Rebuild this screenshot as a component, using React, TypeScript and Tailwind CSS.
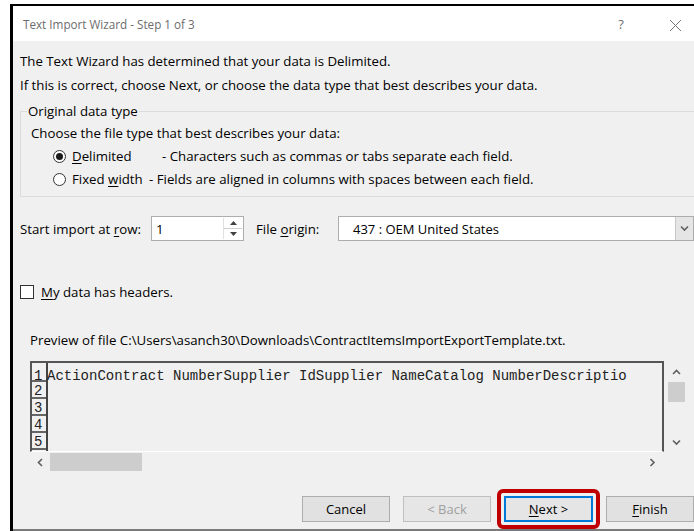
import React from "react";

const ui = "font-['Segoe_UI','Open_Sans',Arial,sans-serif]";
const mono = "font-['Courier_New','Liberation_Mono',monospace]";

function U({ children }: { children: React.ReactNode }) {
  return <span className="underline underline-offset-2">{children}</span>;
}

function Radio({ checked }: { checked?: boolean }) {
  return (
    <span className="w-[13px] h-[13px] rounded-full border border-[#333] bg-white flex items-center justify-center shrink-0">
      {checked && <span className="w-[7px] h-[7px] rounded-full bg-[#1a1a1a]" />}
    </span>
  );
}

function Chevron({ dir }: { dir: "up" | "down" | "left" | "right" }) {
  const d = {
    up: "M1 5 L4.5 1.5 L8 5",
    down: "M1 1.5 L4.5 5 L8 1.5",
    left: "M5 1 L1.5 4.5 L5 8",
    right: "M1.5 1 L5 4.5 L1.5 8",
  }[dir];
  const vertical = dir === "up" || dir === "down";
  return (
    <svg width={vertical ? 9 : 7} height={vertical ? 7 : 9} viewBox={vertical ? "0 0 9 7" : "0 0 7 9"}>
      <path d={d} fill="none" stroke="#606060" strokeWidth="1.6" />
    </svg>
  );
}

function Button({ label, disabled, focused }: { label: React.ReactNode; disabled?: boolean; focused?: boolean }) {
  return (
    <div
      className={`w-[89px] h-[26px] flex items-center justify-center text-[13px] ${
        focused
          ? "border-2 border-[#0078d7] bg-[#e5e5e5] text-black"
          : disabled
          ? "border border-[#bfbfbf] bg-[#e6e6e6] text-[#a0a0a0]"
          : "border border-[#adadad] bg-[#e1e1e1] text-black"
      }`}
    >
      {label}
    </div>
  );
}

const rows = [1, 2, 3, 4, 5];

export default function App() {
  return (
    <div className={`w-[694px] h-[531px] bg-white pl-[10px] pt-[4px] overflow-hidden ${ui}`}>
      <div className="h-[527px] border-l-[3px] border-t-2 border-black bg-[#f0f0f0] flex flex-col">
        {/* title bar */}
        <div className="h-[35px] bg-white flex items-center pl-[10px] pt-[3px] text-[11.7px] text-[#6d6d6d] shrink-0">
          <span className="flex-1">Text Import Wizard - Step 1 of 3</span>
          <span className="w-[20px] text-center mr-[38px] text-[13px]">?</span>
          <svg width="13" height="13" viewBox="0 0 13 13" className="mr-[12px]">
            <path d="M1 1 L12 12 M12 1 L1 12" stroke="#777" strokeWidth="1" />
          </svg>
        </div>

        <div className="flex-1 flex flex-col pl-[7px] text-[13.25px] text-black leading-[16px]">
          <p className="mt-[12px]">The Text Wizard has determined that your data is Delimited.</p>
          <p className="mt-[8px]">If this is correct, choose Next, or choose the data type that best describes your data.</p>

          {/* original data type group */}
          <div className="relative mt-[18px] -mr-[10px] h-[86px] border border-[#dcdcdc] pl-[10px] pt-[13px]">
            <span className="absolute -top-[9px] left-[6px] px-[1px] bg-[#f0f0f0]">Original data type</span>
            <p>Choose the file type that best describes your data:</p>
            <div className="flex items-center mt-[7px] ml-[22px] h-[16px]">
              <Radio checked />
              <span className="ml-[6px] w-[90px]"><U>D</U>elimited</span>
              <span>- Characters such as commas or tabs separate each field.</span>
            </div>
            <div className="flex items-center mt-[7px] ml-[22px] h-[16px]">
              <Radio />
              <span className="ml-[6px] w-[77px]">Fixed <U>w</U>idth</span>
              <span>- Fields are aligned in columns with spaces between each field.</span>
            </div>
          </div>

          {/* start row / file origin */}
          <div className="flex items-center mt-[19px] h-[25px]">
            <span className="w-[131px]">Start import at <U>r</U>ow:</span>
            <div className="w-[93px] h-[25px] border border-[#adadad] bg-white flex items-center">
              <span className="flex-1 pl-[4px]">1</span>
              <div className="w-[19px] h-[21px] flex flex-col border-l border-[#e0e0e0] mr-[1px]">
                <div className="flex-1 flex items-center justify-center border-b border-[#d0d0d0]">
                  <svg width="7" height="4" viewBox="0 0 7 4"><path d="M0 4 L3.5 0 L7 4 Z" fill="#404040" /></svg>
                </div>
                <div className="flex-1 flex items-center justify-center">
                  <svg width="7" height="4" viewBox="0 0 7 4"><path d="M0 0 L3.5 4 L7 0 Z" fill="#404040" /></svg>
                </div>
              </div>
            </div>
            <span className="ml-[12px] w-[82px]">File <U>o</U>rigin:</span>
            <div className="flex-1 h-[25px] border border-[#adadad] bg-white flex items-center">
              <span className="flex-1 pl-[14px] text-[13px]">437 : OEM United States</span>
              <div className="w-[18px] h-[23px] bg-[#e5e5e5] border-l border-[#c8c8c8] flex items-center justify-center">
                <Chevron dir="down" />
              </div>
            </div>
          </div>

          {/* headers checkbox */}
          <div className="flex items-center mt-[43px] h-[16px]">
            <span className="w-[14px] h-[14px] border border-[#333] bg-white" />
            <span className="ml-[7px]"><U>M</U>y data has headers.</span>
          </div>

          {/* preview */}
          <p className="mt-[32px] ml-[10px]">
            Preview of file C:\Users\asanch30\Downloads\ContractItemsImportExportTemplate.txt.
          </p>
          <div className="ml-[10px] mt-[13px] flex">
            <div className="w-[634px] flex flex-col">
              <div className={`h-[91px] border-t-2 border-l-2 border-r-2 border-[#555] border-b border-b-white flex overflow-hidden ${mono} text-[14px] leading-[14px] text-[#222]`}>
                <div className="w-[16px] flex flex-col shrink-0 border-r-2 border-[#444]">
                  {rows.map((n) => (
                    <div
                      key={n}
                      className={`${n === 1 ? "h-[19px] pt-[6px]" : "h-[17px] pt-[2px]"} border-b-2 border-[#666] pl-[2px]`}
                    >
                      {n}
                    </div>
                  ))}
                </div>
                <div className="whitespace-pre pt-[6px] -ml-[1px]">
                  ActionContract NumberSupplier IdSupplier NameCatalog NumberDescriptio
                </div>
              </div>
              <div className="h-[20px] flex items-center">
                <span className="w-[20px] flex justify-center"><Chevron dir="left" /></span>
                <span className="w-[92px] h-[18px] bg-[#cdcdcd]" />
                <span className="flex-1" />
                <span className="w-[20px] flex justify-center mr-[2px]"><Chevron dir="right" /></span>
              </div>
            </div>
            <div className="w-[20px] ml-[2px] h-[91px] flex flex-col items-center pt-[1px]">
              <div className="h-[20px] flex items-center"><Chevron dir="up" /></div>
              <div className="w-[17px] h-[20px] bg-[#cdcdcd]" />
              <div className="flex-1" />
              <div className="h-[20px] flex items-center"><Chevron dir="down" /></div>
            </div>
          </div>

          {/* buttons */}
          <div className="mt-[17px] flex items-center pl-[282px] gap-[13px]">
            <Button label="Cancel" />
            <Button label="< Back" disabled />
            <div className="-mx-[7px] p-[3px] border-[4px] border-[#c00000] rounded-[6px]">
              <Button label={<><U>N</U>ext &gt;</>} focused />
            </div>
            <Button label={<><U>F</U>inish</>} />
          </div>
        </div>
        <div className="h-[2px] bg-[#7a7a7a]" />
      </div>
    </div>
  );
}
